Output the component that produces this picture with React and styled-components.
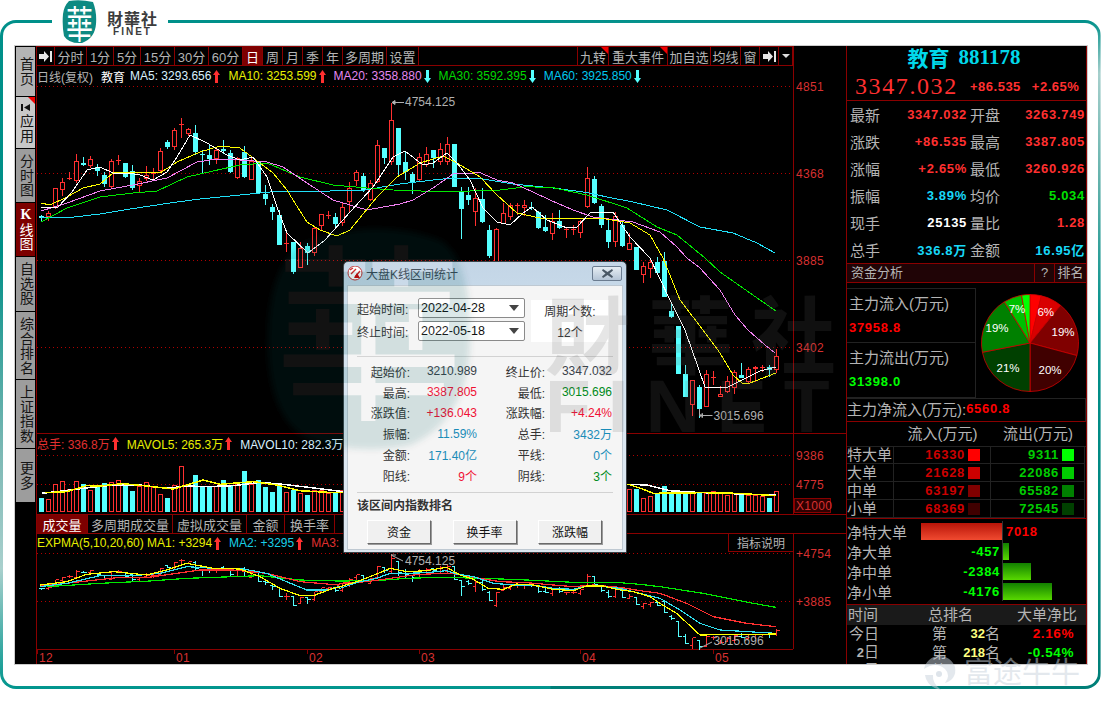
import React from 'react';
import styled, { createGlobalStyle, css } from 'styled-components';

const sans = `"Liberation Sans", "Noto Sans CJK SC", sans-serif`;
const serif = `"Liberation Serif", "Noto Sans CJK SC", serif`;

const RED_LINE = '#8a0000';
const LABEL = '#b4b4b4';

// x,y pairs read off enlarged crops -> screen px
const scaled = (ox, oy, list) => list.map(([x, y]) => [ox + x / 3, oy + y / 3]);
const pts = list => list.map(p => p.join(',')).join(' ');
const candleX = i => 41.5 + 7 * i;

// high, body top, body bottom, low, 1 = up (red)
const candles = [
  [215, 216, 218, 222, 0], [211, 213, 217, 221, 1], [188, 188, 208, 209, 1], [178, 182, 190, 196, 1], [172, 178, 179, 180, 1],
  [154, 161, 181, 183, 1], [157, 163, 165, 166, 0], [156, 159, 166, 168, 1], [164, 167, 171, 176, 0], [172, 175, 184, 187, 0],
  [159, 161, 187, 188, 1], [155, 160, 161, 165, 1], [163, 163, 177, 178, 0], [165, 171, 188, 190, 0], [178, 181, 186, 193, 1],
  [166, 175, 179, 181, 1], [168, 173, 174, 181, 1], [148, 151, 171, 172, 1], [140, 142, 147, 149, 0], [128, 130, 147, 150, 1],
  [118, 124, 125, 138, 1], [128, 129, 134, 136, 1], [125, 133, 152, 155, 0], [150, 154, 155, 174, 0], [145, 155, 159, 165, 0],
  [148, 150, 159, 164, 1], [140, 149, 151, 154, 0], [150, 153, 172, 173, 0], [157, 158, 178, 179, 1], [146, 152, 177, 178, 0],
  [157, 161, 180, 180, 1], [162, 162, 193, 194, 0], [185, 194, 199, 205, 0], [204, 207, 212, 220, 0], [210, 215, 245, 245, 0],
  [232, 243, 244, 252, 1], [242, 242, 272, 274, 0], [242, 248, 268, 268, 1], [243, 246, 253, 265, 0], [227, 228, 253, 256, 1],
  [214, 214, 226, 231, 1], [211, 215, 216, 219, 1], [213, 217, 224, 228, 0], [202, 207, 223, 226, 1], [182, 188, 202, 212, 1],
  [170, 172, 181, 186, 1], [173, 176, 190, 192, 0], [180, 183, 200, 201, 1], [140, 145, 182, 183, 1], [148, 148, 158, 164, 0],
  [103, 120, 162, 165, 1], [128, 128, 165, 175, 0], [152, 162, 172, 180, 0], [172, 174, 182, 194, 0], [153, 157, 180, 181, 1],
  [147, 154, 165, 167, 1], [150, 150, 158, 168, 0], [143, 149, 162, 165, 1], [137, 144, 162, 165, 1], [144, 144, 187, 187, 0],
  [187, 191, 209, 239, 0], [187, 195, 200, 205, 0], [188, 198, 212, 226, 1], [188, 199, 222, 223, 0], [225, 230, 256, 258, 0],
  [228, 229, 272, 275, 1], [203, 213, 224, 224, 1], [203, 205, 217, 220, 1], [203, 205, 206, 215, 1], [200, 205, 208, 216, 1],
  [202, 207, 208, 210, 0], [211, 212, 228, 229, 0], [215, 227, 231, 232, 0], [213, 221, 234, 240, 1], [210, 221, 228, 229, 0],
  [227, 229, 230, 238, 1], [225, 229, 230, 235, 1], [220, 221, 233, 238, 1], [167, 178, 207, 208, 1], [176, 179, 203, 204, 0],
  [204, 206, 225, 228, 0], [219, 230, 242, 248, 0], [212, 216, 242, 247, 1], [220, 225, 246, 247, 0], [233, 243, 250, 250, 1],
  [247, 247, 270, 270, 0], [262, 266, 275, 283, 1], [260, 262, 269, 278, 1], [257, 262, 273, 274, 0], [252, 261, 297, 297, 0],
  [303, 311, 317, 318, 0], [326, 326, 374, 374, 0], [365, 374, 397, 397, 0], [380, 380, 405, 416, 1], [385, 387, 409, 418, 0],
  [370, 374, 407, 407, 1], [371, 377, 378, 385, 1], [386, 394, 397, 397, 1], [376, 381, 392, 393, 1], [370, 372, 388, 394, 1],
  [363, 375, 378, 378, 0], [367, 369, 382, 383, 1], [366, 367, 369, 382, 1], [365, 367, 368, 372, 1], [365, 367, 370, 377, 0],
  [349, 356, 370, 373, 1],
];

const volumeTops = [
  498, 499, 484, 481, 489, 481, 484, 490, 485, 483, 482, 480, 486, 491, 486, 482, 487, 494, 498, 485, 466, 486, 475, 487, 487, 486,
  480, 485, 484, 471, 484, 480, 487, 492, 486, 492, 490, 493, 495, 490, 490, 493, 493, 490,
  ...Array(40).fill(490),
  489, 489, 498, 496, 493, 486, 493, 491, 491, 493, 493, 493, 491, 493, 495, 493, 493, 495, 495, 496, 498, 491,
];

const ma60 = [[41, 218], [70, 217.5], [100, 214], [130, 209], [170, 203], [200, 199], [260, 193], [280, 191], [330, 191], [365, 190], [400, 184], [433, 180], [453, 178], [480, 178.5], [513, 184], [553, 188], [587, 192.5], [607, 197], [633, 202], [667, 210], [700, 227], [733, 233], [757, 243], [775, 253]];
const ma30 = [[41, 222], [67, 208], [100, 197], [133, 193], [157, 191], [187, 177], [213, 171], [240, 165], [267, 163], [300, 177], [333, 185], [367, 188], [400, 190.5], [450, 191.7], [500, 190], [527, 186.7], [553, 187.7], [587, 195], [627, 208], [657, 227], [677, 235], [705, 258], [720, 272], [740, 286], [760, 300], [776, 311]];
const ma20 = [[41, 211], [67, 203], [100, 191], [133, 185], [167, 178], [197, 162], [217, 159], [240, 160], [267, 162], [283, 167], [307, 183], [333, 200], [367, 210], [400, 204], [413, 200], [433, 188], [453, 174], [480, 172.7], [497, 180], [513, 183], [533, 192], [550, 200], [573, 210], [593, 217], [617, 220], [633, 222], [660, 232], [677, 247], [687, 258], [700, 268], [720, 290], [735, 315], [748, 330], [765, 345], [775, 353]];
const ma10 = [[41, 203], [50, 205], [67, 197], [83, 188], [100, 184], [113, 173], [133, 172], [160, 173], [177, 162], [200, 152], [220, 146], [240, 148], [260, 163], [273, 173], [287, 190], [293, 200], [307, 222], [320, 230], [337, 236], [350, 230], [377, 197], [397, 177], [420, 163], [443, 156], [457, 163], [480, 177], [497, 195], [517, 213], [540, 218], [600, 218], [630, 223], [650, 235], [663, 258], [680, 300], [703, 330], [720, 353], [733, 375], [742, 383], [750, 383], [776, 373]];
const ma5 = [[41, 207], [57, 208], [72, 192], [87, 170], [100, 167], [113, 173], [127, 173], [140, 175], [153, 180], [167, 172], [177, 157], [190, 135], [207, 143], [227, 155], [240, 160], [253, 157], [267, 177], [277, 207], [287, 233], [308, 253], [325, 240], [350, 212], [373, 187], [393, 157], [405, 151], [423, 165], [433, 163], [447, 153], [457, 163], [470, 180], [483, 208], [497, 222], [510, 225], [523, 213], [532, 207], [547, 220], [567, 228], [577, 227], [590, 213], [613, 212], [630, 237], [650, 258], [670, 300], [685, 330], [705, 387], [728, 387], [742, 380], [760, 371], [776, 367]];

const volWhite = [...scaled(0, 425, [[125, 205], [170, 200], [250, 190], [340, 180], [420, 180], [500, 190], [560, 183], [620, 185], [700, 182], [780, 172], [850, 178], [950, 190], [1030, 200]]), ...scaled(620, 330, [[25, 463], [80, 465], [150, 482], [230, 487], [300, 490], [468, 495]])];
const volYellow = [...scaled(0, 425, [[135, 203], [200, 200], [260, 182], [300, 183], [370, 176], [440, 183], [520, 192], [610, 165], [660, 178], [760, 170], [830, 180], [900, 197], [1000, 203]]), ...scaled(620, 330, [[25, 463], [70, 478], [100, 490], [250, 488], [350, 490], [468, 497]])];

const expGreen = [...scaled(0, 425, [[140, 485], [300, 475], [450, 468], [560, 460], [700, 455], [780, 452], [900, 465], [1015, 468]]), ...scaled(340, 550, [[110, 92], [200, 85], [300, 82], [430, 85], [560, 90], [700, 97], [840, 98], [900, 103], [960, 110]]), ...scaled(620, 330, [[250, 790], [400, 820], [468, 832]])];
const expRed = [...scaled(0, 425, [[120, 482], [200, 475], [350, 458], [440, 458], [530, 445], [600, 435], [700, 435], [800, 445], [900, 470], [1015, 480]]), ...scaled(340, 550, [[0, 100], [80, 95], [150, 85], [220, 75], [300, 70], [350, 72], [420, 85], [480, 95], [560, 98], [640, 105], [700, 110], [760, 105], [840, 112], [900, 122], [960, 130]]), ...scaled(620, 330, [[200, 820], [280, 860], [380, 880], [468, 890]])];
const expCyan = [...scaled(0, 425, [[120, 485], [200, 475], [300, 452], [400, 452], [480, 445], [560, 425], [640, 430], [730, 432], [800, 445], [860, 470], [920, 495], [980, 495], [1015, 485]]), ...scaled(340, 550, [[0, 115], [60, 95], [110, 85], [150, 70], [200, 70], [260, 68], [320, 62], [350, 72], [400, 80], [460, 100], [520, 105], [580, 105], [640, 115], [700, 118], [740, 108], [790, 110], [840, 115], [900, 130], [960, 145]]), ...scaled(620, 330, [[180, 840], [240, 880], [300, 900], [468, 910]])];
const expYellow = [...scaled(0, 425, [[120, 480], [200, 470], [260, 448], [340, 440], [440, 450], [500, 435], [560, 415], [640, 430], [720, 432], [780, 455], [840, 490], [900, 512], [940, 512], [1000, 490], [1015, 487]]), ...scaled(340, 550, [[0, 110], [60, 92], [110, 72], [150, 55], [200, 65], [260, 62], [320, 52], [360, 75], [400, 88], [445, 115], [490, 118], [530, 102], [580, 105], [640, 118], [700, 122], [740, 108], [790, 108], [830, 118], [880, 125], [930, 140], [960, 160]]), ...scaled(620, 330, [[170, 850], [240, 915], [468, 912]])];

const toExp = y => Math.round(553 + (y - 102) * 0.3038) + 0.5;

const GlobalStyle = createGlobalStyle`
  html, body {
    margin: 0;
    background: #fff;
    overflow: hidden;
  }
  * { box-sizing: border-box; }
`;

const Page = styled.div`
  position: relative;
  width: 1101px;
  height: 709px;
  padding-top: 20px;
  font-family: ${sans};
`;

const Frame = styled.div`
  height: 669px;
  padding: 3px;
  border-radius: 16px;
  background:
    linear-gradient(180deg, #00908a 0%, #008f87 35%, #7db9b5 65%, #a9d0cd 82%, #00958d 100%) left / 50% 100% no-repeat,
    linear-gradient(180deg, #00908a 0%, #a6cfcc 8%, #5fb0aa 25%, #00908a 45%, #007f78 100%) right / 50.1% 100% no-repeat;
`;

const FrameBody = styled.div`
  height: 100%;
  padding: 23px 11px 22px 12px;
  border-radius: 13px;
  background: #fff;
`;

const Terminal = styled.div`
  position: relative;
  display: flex;
  height: 618px;
  background: #000;
  overflow: hidden;
  box-shadow: 0 0 0 1px #ccc;
`;

const LogoBox = styled.div`
  position: absolute;
  left: 52px;
  top: 0;
  display: flex;
  align-items: center;
  gap: 10px;
  width: 116px;
  height: 44px;
  padding-left: 10px;
  background: #fff;
`;

const LogoWords = styled.div`
  display: flex;
  flex-direction: column;
  align-items: center;
  margin-top: 2px;
  color: #3c3c3c;
  font-weight: 700;
`;

const LogoCn = styled.span`
  font-size: 16px;
  line-height: 16px;
  letter-spacing: 1px;
  font-family: "Noto Sans CJK TC", sans-serif;
`;

const LogoEn = styled.span`
  font-size: 10px;
  line-height: 11px;
  letter-spacing: 2px;
`;

const Nav = styled.nav`
  display: flex;
  flex-direction: column;
  gap: 1px;
  flex: none;
  width: 21px;
  padding: 1px 1px 0;
`;

const NavItem = styled.div`
  position: relative;
  display: flex;
  flex-direction: column;
  align-items: center;
  justify-content: center;
  height: ${p => p.$h}px;
  background: ${p => (p.$active ? '#7d0000' : p.$light ? '#c8c8c8' : p.$home ? '#b4b4b4' : '#9d9d9d')};
  color: ${p => (p.$active ? '#fff' : '#151515')};
  ${p => p.$flag && css`
    &::after {
      content: '';
      position: absolute;
      top: 0;
      right: 0;
      border-top: 7px solid #f00000;
      border-left: 7px solid transparent;
    }
  `}
`;

const NavText = styled.span`
  font-size: 14px;
  line-height: 19px;
  letter-spacing: 0.5px;
  writing-mode: vertical-rl;
  text-orientation: upright;
  b { font-family: ${serif}; }
`;

const NavGlyph = styled.svg`
  margin-bottom: 2px;
`;

const Main = styled.div`
  flex: none;
  width: 810px;
  border-left: 1px solid ${RED_LINE};
`;

const Toolbar = styled.div`
  display: flex;
  width: 757px;
  height: 20px;
  border-top: 1px solid ${RED_LINE};
  border-bottom: 1px solid ${RED_LINE};
  border-right: 1px solid ${RED_LINE};
`;

const ToolItem = styled.div`
  position: relative;
  display: flex;
  align-items: center;
  justify-content: center;
  flex: none;
  width: ${p => p.$w}px;
  height: 18px;
  border-right: 1px solid ${RED_LINE};
  background: ${p => (p.$active ? '#7d0000' : 'transparent')};
  color: ${p => (p.$active ? '#fff' : LABEL)};
  font-size: 13px;
  ${p => p.$flag && css`
    &::after {
      content: '';
      position: absolute;
      top: 0;
      right: 0;
      border-top: 7px solid #f00000;
      border-left: 7px solid transparent;
    }
  `}
`;

const ToolSpacer = styled.div`
  flex: 1;
  border-right: 1px solid ${RED_LINE};
`;

const InfoRow = styled.div`
  display: flex;
  align-items: center;
  gap: 8px;
  width: 757px;
  height: ${p => p.$h || 20}px;
  border-right: 1px solid ${RED_LINE};
  white-space: nowrap;
  overflow: hidden;
  font-size: 12px;
`;

const InfoText = styled.span`
  color: ${p => p.$color || LABEL};
  margin-right: ${p => p.$after || 0}px;
`;

const Ma = styled.span`
  display: flex;
  align-items: center;
  gap: 2px;
  flex: none;
  color: ${p => p.$color};
`;

const Chart = styled.svg`
  display: block;
  overflow: visible;
  font-family: ${sans};
`;

const PaneHeader = styled.div`
  display: flex;
  width: 809px;
  height: ${p => p.$h}px;
  border-top: 1px solid ${RED_LINE};
`;

const Tabs = styled.div`
  display: flex;
  width: 809px;
  height: 19px;
  border-top: 1px solid ${RED_LINE};
`;

const ExplainButton = styled.div`
  display: flex;
  align-items: center;
  justify-content: center;
  flex: none;
  align-self: stretch;
  width: 65px;
  margin-left: auto;
  border-left: 1px solid ${RED_LINE};
  border-bottom: 1px solid ${RED_LINE};
  color: ${LABEL};
  font-size: 12px;
`;

const Side = styled.aside`
  flex: none;
  width: 241px;
  height: 618px;
  border-left: 1px solid ${RED_LINE};
  border-right: 1px solid ${RED_LINE};
  overflow: hidden;
  color: ${LABEL};
  font-size: 15px;
`;

const QuoteHead = styled.div`
  height: 55px;
  border-bottom: 1px solid ${RED_LINE};
`;

const QuoteName = styled.div`
  display: flex;
  align-items: center;
  justify-content: center;
  gap: 9px;
  height: 27px;
  padding: 0 5px 5px 0;
  color: #00d8ea;
  font-family: ${serif};
  font-size: 21px;
  font-weight: 700;
`;

const QuotePrice = styled.div`
  display: flex;
  align-items: center;
  height: 26px;
  padding-left: 8px;
  color: #ff3030;
  font-family: "Liberation Sans", sans-serif;
  font-size: 13px;
  font-weight: 700;
  letter-spacing: 0.5px;
`;

const BigPrice = styled.span`
  width: 115px;
  font-family: ${serif};
  font-size: 24px;
  font-weight: 400;
  letter-spacing: 1.6px;
`;

const StatGrid = styled.div`
  display: grid;
  grid-template-columns: 33px 84px 33px 1fr;
  grid-auto-rows: 27px;
  align-items: center;
  height: 162px;
  padding: 0 1px 0 3px;
  white-space: nowrap;
`;

const Num = styled.span`
  color: ${p => p.$color || '#ff3030'};
  font-family: ${sans};
  font-size: 13px;
  font-weight: 700;
  letter-spacing: 0.7px;
  text-align: ${p => p.$align || 'right'};
  white-space: nowrap;
`;

const SectionBar = styled.div`
  display: flex;
  height: 20px;
  border-top: 1px solid ${RED_LINE};
  border-bottom: 1px solid ${RED_LINE};
  background: #200406;
  font-size: 13px;
  line-height: 17px;
`;

const SectionTitle = styled.span`
  flex: 1;
  padding-left: 4px;
`;

const SectionButton = styled.span`
  width: ${p => p.$w}px;
  border-left: 1px solid ${RED_LINE};
  text-align: center;
`;

const Funds = styled.div`
  display: flex;
  height: 115px;
  padding-top: 5px;
`;

const FundCol = styled.div`
  flex: none;
  width: 129px;
`;

const FundBox = styled.div`
  display: flex;
  flex-direction: column;
  gap: 6px;
  height: 55px;
  padding: 6px 2px 0;
  border: 1px solid #222;
  border-left: 0;
  border-top-width: ${p => (p.$first ? 1 : 0)}px;
  line-height: 18px;
  white-space: nowrap;
`;

const Pie = styled.svg`
  display: block;
  margin: 5px 0 0 4px;
  font-family: ${sans};
`;

const NetRow = styled.div`
  display: flex;
  align-items: center;
  height: 24px;
  padding-bottom: 3px;
  border: 1px solid #222;
  border-left: 0;
  border-bottom-color: ${RED_LINE};
  white-space: nowrap;
`;

const FlowHead = styled.div`
  display: grid;
  grid-template-columns: 47px 97px 94px;
  align-items: center;
  height: 24px;
  padding-bottom: 4px;
  text-align: center;
`;

const FlowGrid = styled.div`
  display: grid;
  grid-template-columns: 47px 97px 94px;
  grid-auto-rows: 18px;
  height: 73px;
  border-bottom: 1px solid ${RED_LINE};
  box-shadow: inset 0 1px 0 #222;
`;

const FlowLabel = styled.div`
  display: flex;
  align-items: center;
  padding-bottom: 2px;
  border-bottom: 1px solid #222;
  border-right: 1px solid #222;
  white-space: nowrap;
  overflow: hidden;
`;

const FlowCell = styled.div`
  display: flex;
  align-items: center;
  justify-content: flex-end;
  gap: 3px;
  padding-right: 10px;
  border-bottom: 1px solid #222;
  border-right: 1px solid #222;
`;

const Swatch = styled.i`
  width: 12px;
  height: 12px;
  background: ${p => p.$color};
`;

const NetBars = styled.div`
  height: 86px;
  padding-top: 2px;
  border-bottom: 1px solid ${RED_LINE};
`;

const NetBarRow = styled.div`
  display: flex;
  height: 20px;
`;

const NetLeft = styled.div`
  display: flex;
  align-items: center;
  justify-content: space-between;
  flex: none;
  width: 155px;
  padding-right: ${p => p.$pad ?? 2}px;
  white-space: nowrap;
`;

const NetRight = styled.div`
  display: flex;
  align-items: center;
  flex: 1;
  border-left: 1px solid #333;
`;

const NetBar = styled.div`
  width: ${p => p.$w}px;
  height: 17px;
  background: ${p => (p.$red
    ? 'linear-gradient(180deg, #b81408, #f04a30)'
    : 'linear-gradient(180deg, #128000, #58d800)')};
`;

const NetValue = styled(Num)`
  margin-left: 3px;
`;

const RankHead = styled.div`
  display: grid;
  grid-template-columns: 80px 73px 1fr;
  align-items: center;
  height: 20px;
  padding-left: 1px;
  background: #1a1a1a;
  line-height: 18px;
`;

const RankRow = styled.div`
  display: grid;
  grid-template-columns: 32px 48px 73px 1fr;
  align-items: center;
  height: 18px;
  line-height: 18px;
  white-space: nowrap;
`;

const RankWhen = styled.span`
  text-align: right;
  b { font-size: 13px; }
`;

const RankPlace = styled.span`
  grid-column: 3;
  display: flex;
  padding-left: 5px;
`;

const RankValue = styled.b`
  flex: 1;
  color: #ffff80;
  font-size: 13px;
  text-align: right;
`;

const RankPct = styled.b`
  padding-right: 12px;
  color: ${p => p.$color};
  font-size: 13.5px;
  letter-spacing: 0.6px;
  text-align: right;
`;

const RightText = styled.span`
  padding-right: ${p => p.$pad}px;
  text-align: right;
`;

const QuoteChange = styled.span`
  margin-left: ${p => p.$gap || 0}px;
`;

const StatLabel = styled.span`
  padding-left: ${p => p.$pad || 0}px;
`;

const Dialog = styled.div`
  position: absolute;
  left: 328px;
  top: 215px;
  width: 284px;
  height: 292px;
  padding: 0 3px 3px;
  border: 1px solid #3a3f44;
  border-radius: 5px 5px 0 0;
  background: linear-gradient(180deg, #c3d5e6, #c9dbea 14%, #dce8f2 60%, #dce6ef);
  color: #333;
  font-size: 12px;
`;

const DialogTitle = styled.div`
  display: flex;
  align-items: center;
  gap: 3px;
  height: 23px;
  color: #3a4654;
`;

const CloseButton = styled.div`
  display: flex;
  align-items: center;
  justify-content: center;
  width: 30px;
  height: 15px;
  margin: 0 1px 0 auto;
  border: 1px solid #6b7c90;
  border-radius: 2px;
  background: linear-gradient(180deg, #e6edf3, #b4c4d6);
`;

const DialogBody = styled.div`
  height: 265px;
  padding: 12px 9px 0;
  border: 1px solid #bfc9d2;
  background: #f5f5f5;
`;

const DialogTop = styled.div`
  display: flex;
  gap: 6px;
`;

const DateRows = styled.div`
  display: flex;
  flex-direction: column;
  gap: 3px;
`;

const DateRow = styled.div`
  display: flex;
  align-items: center;
  justify-content: space-between;
  width: 168px;
`;

const SelectBox = styled.div`
  display: flex;
  align-items: center;
  justify-content: space-between;
  width: 107px;
  height: 20px;
  padding: 0 5px 0 2px;
  border: 1px solid #8a8a8a;
  border-radius: 2px;
  background: #fff;
  color: #111;
  font-size: 12.5px;
`;

const SelectArrow = styled.i`
  border-top: 6px solid #444;
  border-left: 5px solid transparent;
  border-right: 5px solid transparent;
`;

const PeriodBox = styled.div`
  display: flex;
  flex-direction: column;
  align-items: center;
  justify-content: space-around;
  width: 78px;
  height: 42px;
  margin-top: 2px;
  background: #fff;
`;

const DialogRule = styled.hr`
  width: 256px;
  height: 1px;
  margin: ${p => p.$top}px 0 ${p => p.$bottom}px;
  border: 0;
  background: #d2d2d2;
`;

const DialogStats = styled.div`
  display: grid;
  grid-template-columns: 53px 67px 68px 67px;
  grid-auto-rows: 20.8px;
  align-items: center;
  text-align: right;
  white-space: nowrap;
`;

const DialogValue = styled.span`
  color: ${p => p.$color || '#3a424a'};
`;

const DialogHeading = styled.div`
  height: 18px;
  color: #333;
  font-weight: 700;
  line-height: 18px;
`;

const DialogButtons = styled.div`
  display: flex;
  gap: 21.5px;
  margin-top: 5px;
  padding-left: 10px;
`;

const DialogButton = styled.div`
  display: flex;
  align-items: center;
  justify-content: center;
  width: 64px;
  height: 24px;
  border: 1px solid;
  border-color: #fff #6a6a6a #6a6a6a #fff;
  box-shadow: 1px 1px 0 #9a9a9a;
  background: #f0f0f0;
  color: #111;
`;

const Watermark = styled.svg`
  position: absolute;
  left: 0;
  top: 0;
  pointer-events: none;
  font-family: "Noto Sans CJK TC", sans-serif;
`;

const FutuMark = styled.div`
  position: absolute;
  left: 921px;
  top: 655px;
  display: flex;
  align-items: center;
  gap: 6px;
  color: rgba(200, 210, 220, 0.5);
  font-size: 29px;
  line-height: 35px;
  pointer-events: none;
`;

const Up = () => (
  <svg width="7" height="13" viewBox="0 0 7 13"><path d="M3.5 0 7 5H5v8H2V5H0z" fill="#ff3030" /></svg>
);
const Down = () => (
  <svg width="7" height="13" viewBox="0 0 7 13"><path d="M3.5 13 0 8h2V0h3v8h2z" fill="#55ffff" /></svg>
);
const JumpEnd = () => (
  <svg width="13" height="11" viewBox="0 0 13 11"><path d="M0 3h5V0l5 5.5L5 11V8H0zM11 0h2v11h-2z" fill="#e6e6e6" /></svg>
);

const leftTools = [
  ['分时', 32], ['1分', 27], ['5分', 27], ['15分', 34], ['30分', 34], ['60分', 34],
  ['日', 20, true], ['周', 20], ['月', 20], ['季', 20], ['年', 20], ['多周期', 44], ['设置', 32],
];

const tabs = [['成交量', 51, true], ['多周期成交量', 85], ['虚拟成交量', 74], ['金额', 38], ['换手率', 50]];

const navItems = [
  { text: '首页', h: 49, home: true },
  { text: '应用', h: 51, light: true, flag: true, glyph: true },
  { text: '分时图', h: 53 },
  { text: <><b>K</b>线图</>, h: 53, active: true },
  { text: '自选股', h: 54 },
  { text: '综合排名', h: 67 },
  { text: '上证指数', h: 68 },
  { text: '更多', h: 53 },
];

const stats = [
  ['最新', '3347.032', '#ff3030', '开盘', '3263.749', '#ff3030'],
  ['涨跌', '+86.535', '#ff3030', '最高', '3387.805', '#ff3030'],
  ['涨幅', '+2.65%', '#ff3030', '最低', '3260.926', '#ff3030'],
  ['振幅', '3.89%', '#18d8f8', '均价', '5.034', '#00e000'],
  ['现手', '25135', '#ffffff', '量比', '1.28', '#ff3030'],
  ['总手', '336.8万', '#18d8f8', '金额', '16.95亿', '#18d8f8'],
];

const flows = [
  ['特大单', '16330', '#ff0000', '9311', '#00ff00'],
  ['大单', '21628', '#cc0000', '22086', '#00cc00'],
  ['中单', '63197', '#800000', '65582', '#008000'],
  ['小单', '68369', '#400000', '72545', '#004000'],
];

const dialogStats = [
  ['起始价:', '3210.989', '', '终止价:', '3347.032', ''],
  ['最高:', '3387.805', '#f01034', '最低:', '3015.696', '#008a20'],
  ['涨跌值:', '+136.043', '#f01034', '涨跌幅:', '+4.24%', '#f01034'],
  ['振幅:', '11.59%', '#1a8cb8', '总手:', '3432万', '#1a8cb8'],
  ['金额:', '171.40亿', '#1a8cb8', '平线:', '0个', '#1a8cb8'],
  ['阳线:', '9个', '#f01034', '阴线:', '3个', '#008a20'],
];

const sliceColors = ['#ff0000', '#d80000', '#800000', '#400000', '#004000', '#008000', '#00c000', '#00ff00'];
const sliceEnds = [13.5, 39, 105, 180, 259, 328, 350, 360];
const sliceLabels = [
  ['6%', 1045.7, 316], ['19%', 1063, 336], ['20%', 1050, 374],
  ['21%', 1008, 372], ['19%', 997, 332], ['7%', 1017, 313],
];

const polar = deg => {
  const a = (deg * Math.PI) / 180;
  return [1030 + 48.5 * Math.sin(a), 343 - 48.5 * Math.cos(a)];
};

const FundPie = () => (
  <Pie width="100" height="100" viewBox="980 293 100 100">
    {sliceEnds.map((end, i) => {
      const start = i ? sliceEnds[i - 1] : 0;
      const [x1, y1] = polar(start);
      const [x2, y2] = polar(end);
      return (
        <path
          key={end}
          d={`M1030 343L${x1} ${y1}A48.5 48.5 0 ${end - start > 180 ? 1 : 0} 1 ${x2} ${y2}Z`}
          fill={sliceColors[i]}
          stroke="#d00000"
          strokeWidth="0.8"
        />
      );
    })}
    {sliceLabels.map(([t, x, y]) => (
      <text key={t + x} x={x} y={y} fill="#fff" fontSize="11.5" textAnchor="middle">{t}</text>
    ))}
  </Pie>
);

const Candle = ({ c, i }) => {
  const [high, top, bottom, low, up] = c;
  const x = candleX(i);
  const color = up ? '#ff3030' : '#55ffff';
  const flat = bottom - top < 2;
  return (
    <g>
      <line x1={x} x2={x} y1={high} y2={low} stroke={color} />
      {flat || !up ? (
        <rect x={x - 2.5} y={top} width="5" height={Math.max(bottom - top, 1)} fill={color} />
      ) : (
        <rect x={x - 2} y={top + 0.5} width="4" height={bottom - top - 1} fill="#000" stroke={color} />
      )}
    </g>
  );
};

const Tick = ({ c, i }) => {
  const [high, top, bottom, low, up] = c;
  const x = candleX(i);
  const color = up ? '#ff3030' : '#55ffff';
  return (
    <g stroke={color}>
      <line x1={x} x2={x} y1={toExp(high)} y2={toExp(low)} />
      <line x1={x - 3} x2={x} y1={toExp(up ? bottom : top)} y2={toExp(up ? bottom : top)} />
      <line x1={x} x2={x + 3} y1={toExp(up ? top : bottom)} y2={toExp(up ? top : bottom)} />
    </g>
  );
};

const Dotted = ({ y }) => (
  <line x1="37" x2="793" y1={y} y2={y} stroke="#b00000" strokeDasharray="1 3" />
);

const AxisText = ({ y, x = 796, children }) => (
  <text x={x} y={y} fill="#d83030" fontSize="12" letterSpacing="0.3">{children}</text>
);

const PriceChart = () => (
  <Chart width="809" height="347" viewBox="37 86 809 347">
    <g shapeRendering="crispEdges">
      <line x1="793.5" x2="793.5" y1="86" y2="433" stroke={RED_LINE} />
      <Dotted y="86.5" /><Dotted y="173.5" /><Dotted y="260.5" /><Dotted y="347.5" />
      {candles.map((c, i) => <Candle key={i} c={c} i={i} />)}
      <g fill="none" strokeWidth="1">
        <polyline points={pts(ma60)} stroke="#20e0f8" />
        <polyline points={pts(ma30)} stroke="#00e800" />
        <polyline points={pts(ma20)} stroke="#f080f0" />
        <polyline points={pts(ma10)} stroke="#ffff00" />
        <polyline points={pts(ma5)} stroke="#ffffff" />
      </g>
    </g>
    <AxisText y="91">4851</AxisText>
    <AxisText y="178">4368</AxisText>
    <AxisText y="265">3885</AxisText>
    <AxisText y="352">3402</AxisText>
    <path d="M392 102.5h12M392 102.5l3-2v4z" stroke="#b0b0b0" fill="#b0b0b0" />
    <text x="405" y="106" fill="#b0b0b0" fontSize="12">4754.125</text>
    <path d="M699.5 409v6.5h13M699.5 415.5l3-2v4z" stroke="#b0b0b0" fill="none" />
    <text x="713.5" y="420" fill="#b0b0b0" fontSize="12">3015.696</text>
  </Chart>
);

const VolumeChart = () => (
  <Chart width="809" height="61" viewBox="37 453 809 61">
    <g shapeRendering="crispEdges">
      <line x1="793.5" x2="793.5" y1="453" y2="514" stroke={RED_LINE} />
      <Dotted y="455.5" /><Dotted y="484.5" />
      {candles.map((c, i) => {
        const x = candleX(i);
        const top = volumeTops[i];
        return c[4]
          ? <rect key={i} x={x - 2} y={top + 0.5} width="4" height={511 - top} fill="#000" stroke="#ff3030" />
          : <rect key={i} x={x - 2.5} y={top} width="5" height={512 - top} fill="#55ffff" />;
      })}
      <rect x="794.5" y="498.5" width="36" height="14" fill="#300000" stroke={RED_LINE} />
      <g fill="none" strokeWidth="1.5">
        <polyline points={pts(volWhite)} stroke="#ffffff" />
        <polyline points={pts(volYellow)} stroke="#ffff00" />
      </g>
    </g>
    <AxisText y="460">9386</AxisText>
    <AxisText y="489">4775</AxisText>
    <AxisText y="510">X1000</AxisText>
  </Chart>
);

const months = [['12', 37], ['01', 174], ['02', 307], ['03', 419], ['04', 580], ['05', 713]];

const ExpmaChart = () => (
  <Chart width="809" height="112" viewBox="37 552 809 112">
    <g shapeRendering="crispEdges">
      <line x1="793.5" x2="793.5" y1="552" y2="649" stroke={RED_LINE} />
      <line x1="37" x2="793" y1="649.5" y2="649.5" stroke={RED_LINE} />
      <Dotted y="553.5" /><Dotted y="601.5" />
      {months.map(([m, x]) => <line key={m} x1={x + 0.5} x2={x + 0.5} y1="649" y2="654" stroke={RED_LINE} />)}
      {candles.map((c, i) => <Tick key={i} c={c} i={i} />)}
      <g fill="none" strokeWidth="1.2">
        <polyline points={pts(expGreen)} stroke="#00e800" />
        <polyline points={pts(expRed)} stroke="#ff3030" />
        <polyline points={pts(expCyan)} stroke="#30e0f0" />
        <polyline points={pts(expYellow)} stroke="#ffff00" />
      </g>
    </g>
    <path d="M391 555l12 6M391 555h5" stroke="#b0b0b0" fill="none" />
    <text x="405" y="565" fill="#b0b0b0" fontSize="12">4754.125</text>
    <path d="M700 648l12-6" stroke="#b0b0b0" fill="none" />
    <text x="713.5" y="645" fill="#b0b0b0" fontSize="12">3015.696</text>
    <AxisText y="558">+4754</AxisText>
    <AxisText y="606">+3885</AxisText>
    {months.map(([m, x]) => <AxisText key={m} x={x + 2} y="661.5">{m}</AxisText>)}
  </Chart>
);

const WatermarkLayer = () => (
  <Watermark width="1072" height="618" viewBox="15 46 1072 618">
    <defs>
      <mask id="wm-cut">
        <rect x="15" y="46" width="1072" height="618" fill="#fff" />
        <text x="369" y="405" fontSize="190" textAnchor="middle" fill="#000">華</text>
      </mask>
      <filter id="wm-soft"><feGaussianBlur stdDeviation="3" /></filter>
    </defs>
    <path
      d="M300 245Q370 215 440 240Q472 260 470 340Q468 420 410 445Q360 455 310 440Q268 420 268 340Q268 270 300 245Z"
      fill="rgba(0,95,95,.14)"
      mask="url(#wm-cut)"
      filter="url(#wm-soft)"
    />
    <text x="369" y="405" fontSize="190" textAnchor="middle" fill="rgba(255,255,255,.07)">華</text>
    <text x="545" y="368" fontSize="85" letterSpacing="18" fontWeight="700" fill="rgba(100,100,100,.16)">財華社</text>
    <text x="545" y="432" fontSize="75" letterSpacing="17" fontWeight="700" fontFamily="Liberation Sans" fill="rgba(100,100,100,.16)">FINET</text>
  </Watermark>
);

const StatsDialog = () => (
  <Dialog>
    <DialogTitle>
      <svg width="16" height="15" viewBox="0 0 16 15">
        <circle cx="8" cy="7" r="7" fill="#fff" stroke="#c03030" />
        <path d="M3 4l3-2M4 8l5-5M8 11l5-6" stroke="#d02020" strokeWidth="1.4" />
        <path d="M10 7l3 5h-6z" fill="#d00000" />
      </svg>
      大盘K线区间统计
      <CloseButton>
        <svg width="11" height="9" viewBox="0 0 11 9"><path d="M1 0l4.5 3L10 0l1 1.5L7.5 4.500 11 7.500 10 9 5.500 6 1 9 0 7.500 3.500 4.500 0 1.500z" fill="#4a5866" /></svg>
      </CloseButton>
    </DialogTitle>
    <DialogBody>
      <DialogTop>
        <DateRows>
          <DateRow>起始时间:<SelectBox>2022-04-28<SelectArrow /></SelectBox></DateRow>
          <DateRow>终止时间:<SelectBox>2022-05-18<SelectArrow /></SelectBox></DateRow>
        </DateRows>
        <PeriodBox><span>周期个数:</span><span>12个</span></PeriodBox>
      </DialogTop>
      <DialogRule $top={14} $bottom={4} />
      <DialogStats>
        {dialogStats.map(row => (
          <React.Fragment key={row[0]}>
            <span>{row[0]}</span>
            <DialogValue $color={row[2]}>{row[1]}</DialogValue>
            <span>{row[3]}</span>
            <DialogValue $color={row[5]}>{row[4]}</DialogValue>
          </React.Fragment>
        ))}
      </DialogStats>
      <DialogRule $top={6} $bottom={4} />
      <DialogHeading>该区间内指数排名</DialogHeading>
      <DialogButtons>
        <DialogButton>资金</DialogButton>
        <DialogButton>换手率</DialogButton>
        <DialogButton>涨跌幅</DialogButton>
      </DialogButtons>
    </DialogBody>
  </Dialog>
);

const SidePanel = () => (
  <Side>
    <QuoteHead>
      <QuoteName><span>教育</span><span>881178</span></QuoteName>
      <QuotePrice>
        <BigPrice>3347.032</BigPrice>
        <span>+86.535</span>
        <QuoteChange $gap={11}>+2.65%</QuoteChange>
      </QuotePrice>
    </QuoteHead>
    <StatGrid>
      {stats.map(r => (
        <React.Fragment key={r[0]}>
          <span>{r[0]}</span>
          <Num $color={r[2]}>{r[1]}</Num>
          <StatLabel $pad={3}>{r[3]}</StatLabel>
          <Num $color={r[5]}>{r[4]}</Num>
        </React.Fragment>
      ))}
    </StatGrid>
    <SectionBar>
      <SectionTitle>资金分析</SectionTitle>
      <SectionButton $w={20}>?</SectionButton>
      <SectionButton $w={32}>排名</SectionButton>
    </SectionBar>
    <Funds>
      <FundCol>
        <FundBox $first>
          <span>主力流入(万元)</span>
          <Num $color="#ff0000" $align="left">37958.8</Num>
        </FundBox>
        <FundBox>
          <span>主力流出(万元)</span>
          <Num $color="#00ff00" $align="left">31398.0</Num>
        </FundBox>
      </FundCol>
      <FundPie />
    </Funds>
    <NetRow>主力净流入(万元):<Num $color="#ff0000">6560.8</Num></NetRow>
    <FlowHead><span /><span>流入(万元)</span><span>流出(万元)</span></FlowHead>
    <FlowGrid>
      {flows.map(f => (
        <React.Fragment key={f[0]}>
          <FlowLabel>{f[0]}</FlowLabel>
          <FlowCell><Num $color="#cc0000">{f[1]}</Num><Swatch $color={f[2]} /></FlowCell>
          <FlowCell><Num $color="#00cc00">{f[3]}</Num><Swatch $color={f[4]} /></FlowCell>
        </React.Fragment>
      ))}
    </FlowGrid>
    <NetBars>
      <NetBarRow>
        <NetLeft $pad={0}>净特大单<NetBar $red $w={81} /></NetLeft>
        <NetRight><NetValue $color="#ff0000">7018</NetValue></NetRight>
      </NetBarRow>
      <NetBarRow>
        <NetLeft>净大单<Num $color="#00ff00">-457</Num></NetLeft>
        <NetRight><NetBar $w={6} /></NetRight>
      </NetBarRow>
      <NetBarRow>
        <NetLeft>净中单<Num $color="#00ff00">-2384</Num></NetLeft>
        <NetRight><NetBar $w={28} /></NetRight>
      </NetBarRow>
      <NetBarRow>
        <NetLeft>净小单<Num $color="#00ff00">-4176</Num></NetLeft>
        <NetRight><NetBar $w={49} /></NetRight>
      </NetBarRow>
    </NetBars>
    <RankHead>
      <span>时间</span>
      <span>总排名</span>
      <RightText $pad={9}>大单净比</RightText>
    </RankHead>
    <RankRow>
      <RankWhen>今日</RankWhen>
      <RankPlace>第<RankValue>32</RankValue>名</RankPlace>
      <RankPct $color="#ff0000">2.16%</RankPct>
    </RankRow>
    <RankRow>
      <RankWhen><b>2</b>日</RankWhen>
      <RankPlace>第<RankValue>218</RankValue>名</RankPlace>
      <RankPct $color="#00ff00">-0.54%</RankPct>
    </RankRow>
    <RankRow>
      <RankWhen><b>3</b>日</RankWhen>
      <RankPlace>第<RankValue>105</RankValue>名</RankPlace>
      <RankPct $color="#ff0000">0.31%</RankPct>
    </RankRow>
  </Side>
);

export default function App() {
  return (
    <Page>
      <GlobalStyle />
      <Frame>
        <FrameBody>
          <Terminal>
            <Nav>
              {navItems.map((item, i) => (
                <NavItem key={i} $h={item.h} $home={item.home} $light={item.light} $flag={item.flag} $active={item.active}>
                  {item.glyph && (
                    <NavGlyph width="9" height="9" viewBox="0 0 9 9"><path d="M0 1h2v7H0zM9 1v7L3 4.500z" fill="#111" /></NavGlyph>
                  )}
                  <NavText>{item.text}</NavText>
                </NavItem>
              ))}
            </Nav>
            <Main>
              <Toolbar>
                <ToolItem $w={18}><JumpEnd /></ToolItem>
                {leftTools.map(([t, w, active]) => <ToolItem key={t} $w={w} $active={active}>{t}</ToolItem>)}
                <ToolSpacer />
                <ToolItem $w={31} $flag>九转</ToolItem>
                <ToolItem $w={59} $flag>重大事件</ToolItem>
                <ToolItem $w={43}>加自选</ToolItem>
                <ToolItem $w={30}>均线</ToolItem>
                <ToolItem $w={19}>窗</ToolItem>
                <ToolItem $w={19}><JumpEnd /></ToolItem>
                <ToolItem $w={14}>
                  <svg width="8" height="4" viewBox="0 0 8 4"><path d="M0 0h8L4 4z" fill="#ddd" /></svg>
                </ToolItem>
              </Toolbar>
              <InfoRow>
                <InfoText>日线(复权)</InfoText>
                <InfoText $color="#fff" $after={-3}>教育</InfoText>
                <Ma $color="#d8f0ff">MA5: 3293.656<Up /></Ma>
                <Ma $color="#e8f000">MA10: 3253.599<Up /></Ma>
                <Ma $color="#e488f0">MA20: 3358.880<Down /></Ma>
                <Ma $color="#00d800">MA30: 3592.395<Down /></Ma>
                <Ma $color="#00c8f0">MA60: 3925.850<Down /></Ma>
              </InfoRow>
              <PriceChart />
              <PaneHeader $h={20}>
                <InfoRow $h={19}>
                  <Ma $color="#e03030">总手: 336.8万<Up /></Ma>
                  <Ma $color="#e8f000">MAVOL5: 265.3万<Up /></Ma>
                  <Ma $color="#d8f0ff">MAVOL10: 282.3万<Up /></Ma>
                </InfoRow>
              </PaneHeader>
              <VolumeChart />
              <Tabs>
                {tabs.map(([t, w, active]) => <ToolItem key={t} $w={w} $active={active}>{t}</ToolItem>)}
              </Tabs>
              <PaneHeader $h={19}>
                <InfoRow $h={18}>
                  <Ma $color="#e8f000">EXPMA(5,10,20,60) MA1: +3294<Up /></Ma>
                  <Ma $color="#18d0e8">MA2: +3295<Up /></Ma>
                  <Ma $color="#e03030">MA3: +3358<Down /></Ma>
                  <ExplainButton>指标说明</ExplainButton>
                </InfoRow>
              </PaneHeader>
              <ExpmaChart />
            </Main>
            <SidePanel />
            <StatsDialog />
            <WatermarkLayer />
          </Terminal>
        </FrameBody>
      </Frame>
      <LogoBox>
        <svg width="35" height="44" viewBox="0 0 35 44">
          <path d="M7 1Q18-1 31 2Q35 12 34 24Q33 38 20 43Q7 44 2 36Q0 26 1 14Q2 6 7 1Z" fill="#0d8a82" />
          <text x="17.500" y="24" fontSize="27" textAnchor="middle" fill="#fff" fontFamily="Noto Sans CJK TC, sans-serif" transform="translate(0 4) scale(1 1.4)">華</text>
        </svg>
        <LogoWords>
          <LogoCn>財華社</LogoCn>
          <LogoEn>FINET</LogoEn>
        </LogoWords>
      </LogoBox>
      <FutuMark>
        <svg width="37" height="36" viewBox="0 0 37 36">
          <path d="M3 14A16 16 0 0 1 34 12Q36 24 24 28Q30 20 24 14Q15 6 3 14Z" fill="rgba(200,210,220,.5)" />
          <path d="M4 20Q6 32 20 35Q11 28 12 20Z" fill="rgba(200,210,220,.5)" />
          <circle cx="18" cy="19" r="3" fill="rgba(200,210,220,.6)" />
        </svg>
        富途牛牛
      </FutuMark>
    </Page>
  );
}
